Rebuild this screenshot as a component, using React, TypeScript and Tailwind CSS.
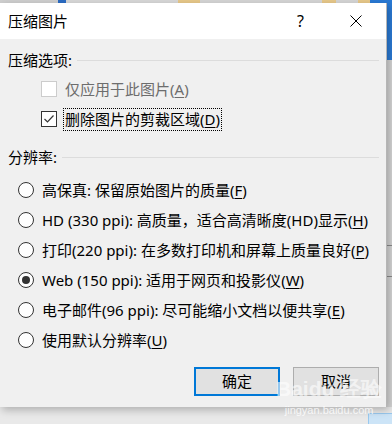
import React from 'react';

const font = { fontFamily: '"Noto Sans", "Noto Sans CJK SC", sans-serif' };

function Key({ k }: { k: string }) {
  return (
    <>
      (<span className="underline underline-offset-2">{k}</span>)
    </>
  );
}

function SectionHeader({ label }: { label: string }) {
  return (
    <div className="flex items-center h-[22px] pl-2 pr-[7px]">
      <span className="text-[15px] leading-none text-black">{label}</span>
      <div className="flex-1 h-px bg-[#dcdcdc] ml-[5px]" />
    </div>
  );
}

function Radio({ checked, children }: { checked?: boolean; children: React.ReactNode }) {
  return (
    <div className="flex items-center h-[30px] pl-[18px]">
      <div className="w-4 h-4 rounded-full border border-[#333] bg-white flex items-center justify-center">
        {checked && <div className="w-2 h-2 rounded-full bg-[#333]" />}
      </div>
      <span className="ml-2 text-[15px] leading-none text-black whitespace-nowrap">{children}</span>
    </div>
  );
}

export default function App() {
  const radios: { text: string; k: string; checked?: boolean }[] = [
    { text: '高保真: 保留原始图片的质量', k: 'F' },
    { text: 'HD (330 ppi): 高质量，适合高清晰度(HD)显示', k: 'H' },
    { text: '打印(220 ppi): 在多数打印机和屏幕上质量良好', k: 'P' },
    { text: 'Web (150 ppi): 适用于网页和投影仪', k: 'W', checked: true },
    { text: '电子邮件(96 ppi): 尽可能缩小文档以便共享', k: 'E' },
    { text: '使用默认分辨率', k: 'U' },
  ];

  return (
    <div className="relative w-[392px] h-[424px] overflow-hidden bg-[#e9e9e9] flex flex-col" style={font}>
      {/* background strip behind the dialog */}
      <div className="h-[3px] flex">
        <div className="w-[58px] bg-[#cfcfcf]" />
        <div className="w-[8px] bg-[#2b6cc4]" />
        <div className="w-[112px] bg-[#d9d9d9]" />
        <div className="w-[22px] bg-[#e8c98a]" />
        <div className="w-[122px] bg-[#d6d6d6]" />
        <div className="w-[14px] bg-[#e8c98a]" />
        <div className="w-[22px] bg-[#d6d6d6]" />
        <div className="w-[12px] bg-[#e8c98a]" />
        <div className="flex-1 bg-[#2a7ad5]" />
      </div>

      <div className="flex h-[404px]">
        {/* dialog */}
        <div className="w-[387px] flex flex-col bg-[#f0f0f0] border-r border-[#b5b5b5] shadow-[2px_3px_8px_rgba(0,0,0,0.25)] z-10">
          <div className="h-[36px] bg-white flex items-center pl-2">
            <span className="text-[15px] text-black leading-none">压缩图片</span>
            <span className="ml-auto mr-[46px] text-[16px] text-black leading-none">?</span>
            <svg width="12" height="12" viewBox="0 0 12 12" className="mr-[24px]">
              <path d="M0.5 0.5 L11.5 11.5 M11.5 0.5 L0.5 11.5" stroke="#000" strokeWidth="1" />
            </svg>
          </div>

          <div className="flex flex-col pt-[10px]">
            <SectionHeader label="压缩选项:" />

            <div className="mt-[3px] flex items-center h-[30px] pl-[41px]">
              <div className="w-4 h-4 border border-[#cccccc] bg-white" />
              <span className="ml-2 text-[15px] leading-none text-[#6d6d6d]">
                仅应用于此图片<Key k="A" />
              </span>
            </div>
            <div className="flex items-center h-[30px] pl-[41px]">
              <div className="w-4 h-4 border border-[#333] bg-white flex items-center justify-center">
                <svg width="12" height="10" viewBox="0 0 12 10">
                  <path d="M1.5 5 L4.5 8 L10.5 1.5" fill="none" stroke="#333" strokeWidth="1.2" />
                </svg>
              </div>
              <span className="ml-[6px] h-[23px] flex items-center px-[1px] border border-dotted border-black text-[15px] leading-none text-black">
                删除图片的剪裁区域<Key k="D" />
              </span>
            </div>

            <div className="mt-[12px]">
              <SectionHeader label="分辨率:" />
            </div>

            <div className="mt-[7px] flex flex-col">
              {radios.map((r) => (
                <Radio key={r.k} checked={r.checked}>
                  {r.text}
                  <Key k={r.k} />
                </Radio>
              ))}
            </div>

            <div className="mt-[12px] flex justify-end gap-[13px] pr-[7px] pb-[11px]">
              <button className="w-[86px] h-[29px] bg-[#e1e1e1] border-2 border-[#0078d7] text-[15px] text-black leading-none">
                确定
              </button>
              <button className="w-[86px] h-[29px] bg-[#e1e1e1] border border-[#adadad] text-[15px] text-black leading-none">
                取消
              </button>
            </div>
          </div>
        </div>

        {/* right edge of the window behind */}
        <div className="flex-1 flex flex-col">
          <div className="h-[57px] bg-[#2a7ad5]" />
          <div className="flex-1 bg-[#d5d5d5] flex flex-col">
            <div className="h-[185px]" />
            <div className="h-px bg-[#8a8a8a]" />
            <div className="h-[30px]" />
            <div className="h-px bg-[#8a8a8a]" />
          </div>
        </div>
      </div>

      <div className="flex-1 flex justify-end items-end">
        <div className="w-[24px] h-[11px] bg-[#cce4f7] border-t border-l border-[#99c9ef]" />
      </div>

      {/* watermark */}
      <div className="absolute left-[276px] top-[378px] z-20 pointer-events-none flex flex-col items-center">
        <span className="text-[21px] font-bold leading-none text-white/60" style={{ fontFamily: '"Liberation Sans", sans-serif' }}>
          Baidu 经验
        </span>
        <span className="mt-[6px] text-[11px] leading-none text-white/80" style={{ fontFamily: '"Liberation Sans", sans-serif' }}>
          jingyan.baidu.com
        </span>
      </div>
    </div>
  );
}
